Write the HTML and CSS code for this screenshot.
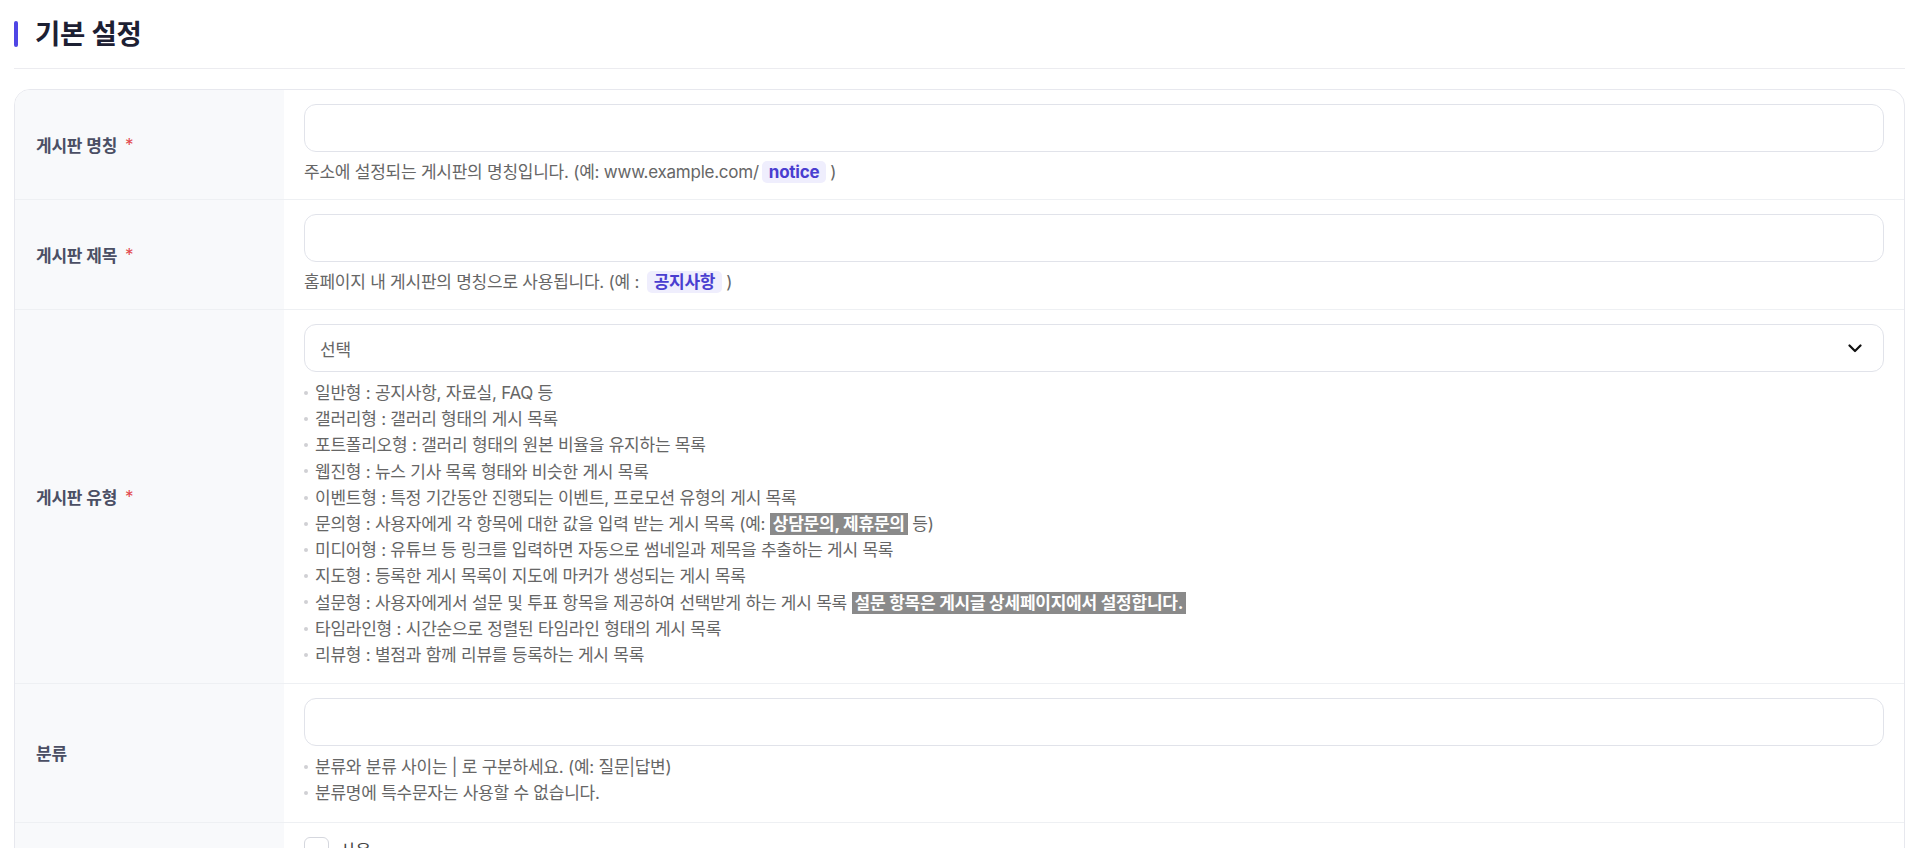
FILE: index.html
```html
<!DOCTYPE html>
<html lang="ko">
<head>
<meta charset="utf-8">
<title>기본 설정</title>
<link rel="stylesheet" href="styles.css">
</head>
<body>
<div class="page">
  <div class="section-head">
    <span class="title-bar"></span>
    <h2 class="section-title">기본 설정</h2>
  </div>

  <div class="form-card">
    <div class="row">
      <div class="label">게시판 명칭<span class="req">*</span></div>
      <div class="field">
        <div class="input"></div>
        <p class="help">주소에 설정되는 게시판의 명칭입니다. (예: www.example.com/<span class="tag">notice</span>)</p>
      </div>
    </div>

    <div class="row">
      <div class="label">게시판 제목<span class="req">*</span></div>
      <div class="field">
        <div class="input"></div>
        <p class="help">홈페이지 내 게시판의 명칭으로 사용됩니다. (예 : <span class="tag">공지사항</span>)</p>
      </div>
    </div>

    <div class="row">
      <div class="label">게시판 유형<span class="req">*</span></div>
      <div class="field">
        <div class="select">
          <span class="select-text">선택</span>
          <svg class="chevron" width="14" height="9" viewBox="0 0 14 9"><path d="M1.5 1.5 L7 7 L12.5 1.5" fill="none" stroke="#111" stroke-width="2.2" stroke-linecap="round" stroke-linejoin="round"/></svg>
        </div>
        <ul class="list">
          <li>일반형 : 공지사항, 자료실, FAQ 등</li>
          <li>갤러리형 : 갤러리 형태의 게시 목록</li>
          <li>포트폴리오형 : 갤러리 형태의 원본 비율을 유지하는 목록</li>
          <li>웹진형 : 뉴스 기사 목록 형태와 비슷한 게시 목록</li>
          <li>이벤트형 : 특정 기간동안 진행되는 이벤트, 프로모션 유형의 게시 목록</li>
          <li>문의형 : 사용자에게 각 항목에 대한 값을 입력 받는 게시 목록 (예: <span class="mark">상담문의, 제휴문의</span> 등)</li>
          <li>미디어형 : 유튜브 등 링크를 입력하면 자동으로 썸네일과 제목을 추출하는 게시 목록</li>
          <li>지도형 : 등록한 게시 목록이 지도에 마커가 생성되는 게시 목록</li>
          <li>설문형 : 사용자에게서 설문 및 투표 항목을 제공하여 선택받게 하는 게시 목록 <span class="mark">설문 항목은 게시글 상세페이지에서 설정합니다.</span></li>
          <li>타임라인형 : 시간순으로 정렬된 타임라인 형태의 게시 목록</li>
          <li>리뷰형 : 별점과 함께 리뷰를 등록하는 게시 목록</li>
        </ul>
      </div>
    </div>

    <div class="row">
      <div class="label">분류</div>
      <div class="field">
        <div class="input"></div>
        <ul class="list">
          <li>분류와 분류 사이는 | 로 구분하세요. (예: 질문|답변)</li>
          <li>분류명에 특수문자는 사용할 수 없습니다.</li>
        </ul>
      </div>
    </div>

    <div class="row">
      <div class="label">비밀글</div>
      <div class="field">
        <label class="check"><span class="box"></span><span class="check-text">사용</span></label>
        <ul class="list">
          <li>비밀글 사용 시 작성자와 관리자만 게시글을 볼 수 있습니다.</li>
          <li>비밀글 설정은 게시글 작성 시 선택할 수 있습니다.</li>
        </ul>
      </div>
    </div>
  </div>
</div>
</body>
</html>
```

FILE: styles.css
```css
* {
  box-sizing: border-box;
}

body {
  margin: 0;
  background: #ffffff;
  font-family: Inter, "Noto Sans CJK KR", "Noto Sans", sans-serif;
  letter-spacing: -0.015em;
  color: #666666;
}

.page {
  padding: 14px 15px 0 14px;
}

.section-head {
  display: flex;
  align-items: center;
  gap: 17px;
  height: 55px;
  padding-bottom: 14px;
  border-bottom: 1px solid #ececf0;
}

.title-bar {
  width: 4px;
  height: 26px;
  border-radius: 2px;
  background: #4f46e5;
}

.section-title {
  margin: 0;
  font-size: 27.5px;
  line-height: 41px;
  font-weight: 700;
  color: #1d2033;
}

.form-card {
  margin-top: 20px;
  border: 1px solid #e7e8ee;
  border-radius: 16px;
  overflow: hidden;
}

.row {
  display: grid;
  grid-template-columns: 269px 1fr;
  border-top: 1px solid #eef0f3;
}

.row:first-child {
  border-top: 0;
}

.label {
  display: flex;
  align-items: center;
  padding-left: 21px;
  background: #f8f9fb;
  font-size: 17px;
  font-weight: 600;
  color: #4b4f64;
}

.req {
  margin-left: 8px;
  color: #e2474b;
  font-weight: 400;
}

.field {
  padding: 14px 20px 15px 20px;
  min-width: 0;
}

.input {
  height: 48px;
  border: 1px solid #e1e3ea;
  border-radius: 12px;
  background: #ffffff;
}

.help {
  margin: 8px 0 0;
  font-size: 17px;
  line-height: 24px;
  color: #666666;
}

.tag {
  display: inline-block;
  margin: 0 4px 0 3px;
  padding: 0 7px;
  line-height: 22px;
  border-radius: 5px;
  background: #efeefd;
  color: #4a3ed0;
  font-weight: 700;
}

.select {
  display: flex;
  align-items: center;
  justify-content: space-between;
  height: 48px;
  padding: 0 21px 0 15px;
  border: 1px solid #e1e3ea;
  border-radius: 12px;
  background: #ffffff;
  font-size: 17px;
  color: #666666;
}

.list {
  list-style: none;
  margin: 8px 0 0;
  padding: 0;
  font-size: 17px;
  line-height: 26.2px;
  color: #666666;
}

.list li::before {
  content: "";
  display: inline-block;
  width: 4px;
  height: 4px;
  margin: 0 7px 3px 0;
  border-radius: 50%;
  background: #d0d0d4;
  vertical-align: middle;
}

.mark {
  padding: 1px 3px;
  background: #8a8a8a;
  color: #ffffff;
  font-weight: 700;
}

.check {
  display: flex;
  align-items: center;
  gap: 11px;
  height: 26px;
}

.box {
  width: 25px;
  height: 25px;
  border: 1px solid #d5d7de;
  border-radius: 6px;
  background: #ffffff;
}

.check-text {
  font-size: 17px;
  color: #444444;
}
```
